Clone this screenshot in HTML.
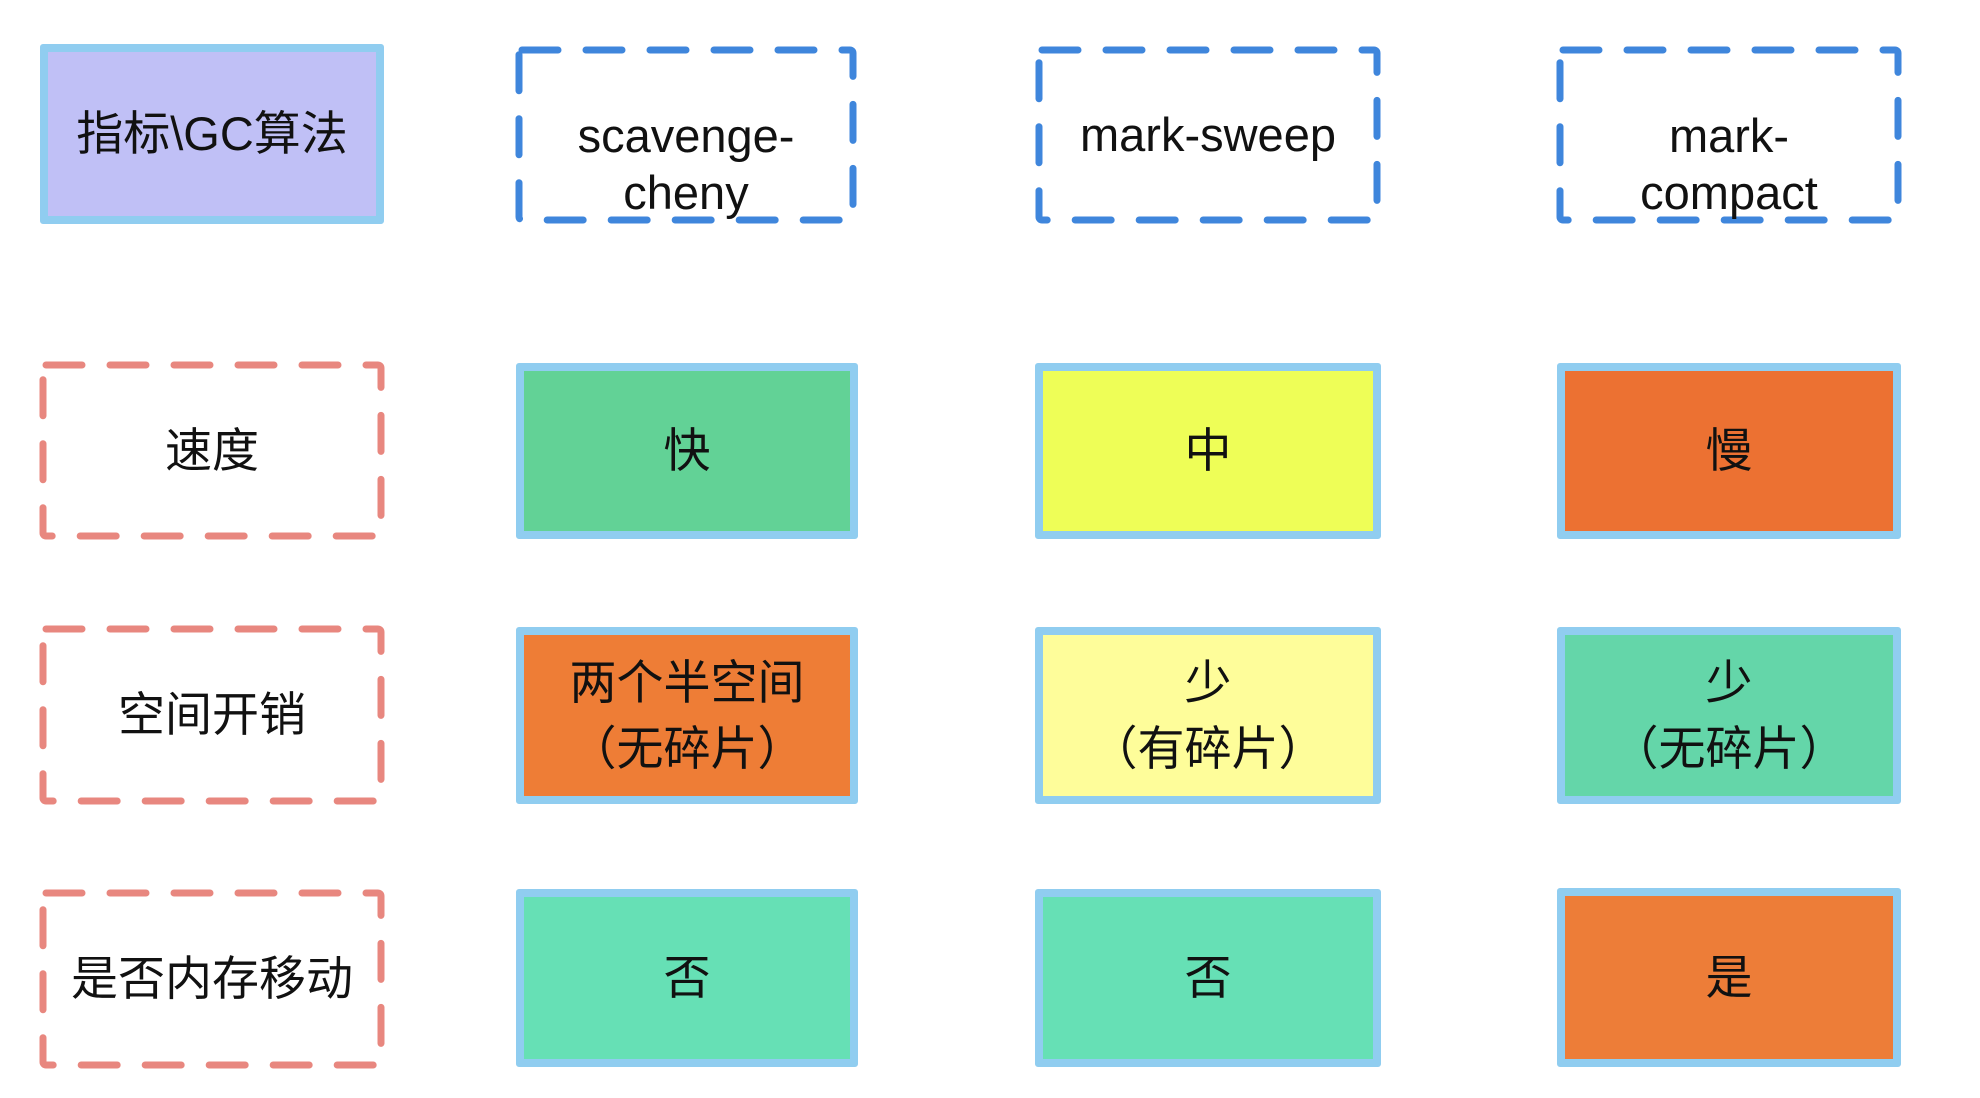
<!DOCTYPE html>
<html><head><meta charset="utf-8"><style>
html,body{margin:0;padding:0;background:#fff;width:1980px;height:1098px;overflow:hidden}
.b{position:absolute;box-sizing:border-box;display:flex;align-items:center;justify-content:center;text-align:center;font-family:"Liberation Sans","Noto Sans CJK SC",sans-serif;font-size:47px;line-height:66px;color:#111}
.l{line-height:57px}
.s{border:8px solid #90cdf0;border-radius:3px}
svg{position:absolute;left:0;top:0}
</style></head><body>
<svg width="1980" height="1098">
<g fill="none" stroke="#3f86dc" stroke-width="7" stroke-linecap="round" stroke-dasharray="36 28">
<rect x="519" y="50" width="334" height="170" rx="3"/>
<rect x="1039" y="50" width="338" height="170" rx="3"/>
<rect x="1560" y="50" width="338" height="170" rx="3"/>
</g>
<g fill="none" stroke="#e8877f" stroke-width="7" stroke-linecap="round" stroke-dasharray="36 28">
<rect x="43" y="365" width="338" height="171" rx="3"/>
<rect x="43" y="629" width="338" height="172" rx="3"/>
<rect x="43" y="893" width="338" height="172" rx="3"/>
</g>
</svg>
<div class="b s" style="left:40px;top:44px;width:344px;height:180px;background:#c0c0f6">指标\GC算法</div>
<div class="b l" style="left:516px;top:47px;width:340px;height:175px;padding-top:58px">scavenge-<br>cheny</div>
<div class="b" style="left:1036px;top:47px;width:344px;height:175px">mark-sweep</div>
<div class="b l" style="left:1557px;top:47px;width:344px;height:175px;padding-top:58px">mark-<br>compact</div>

<div class="b" style="left:40px;top:363px;width:344px;height:175px">速度</div>
<div class="b s" style="left:516px;top:363px;width:342px;height:176px;background:#62d296">快</div>
<div class="b s" style="left:1035px;top:363px;width:346px;height:176px;background:#eefe57">中</div>
<div class="b s" style="left:1557px;top:363px;width:344px;height:176px;background:#ec7132">慢</div>

<div class="b" style="left:40px;top:627px;width:344px;height:176px">空间开销</div>
<div class="b s" style="left:516px;top:627px;width:342px;height:177px;background:#ee7d36">两个半空间<br>（无碎片）</div>
<div class="b s" style="left:1035px;top:627px;width:346px;height:177px;background:#fefd9a">少<br>（有碎片）</div>
<div class="b s" style="left:1557px;top:627px;width:344px;height:177px;background:#64d6a9">少<br>（无碎片）</div>

<div class="b" style="left:40px;top:891px;width:344px;height:176px">是否内存移动</div>
<div class="b s" style="left:516px;top:889px;width:342px;height:178px;background:#66e0b5">否</div>
<div class="b s" style="left:1035px;top:889px;width:346px;height:178px;background:#66e0b5">否</div>
<div class="b s" style="left:1557px;top:888px;width:344px;height:179px;background:#ed7d38">是</div>
</body></html>
